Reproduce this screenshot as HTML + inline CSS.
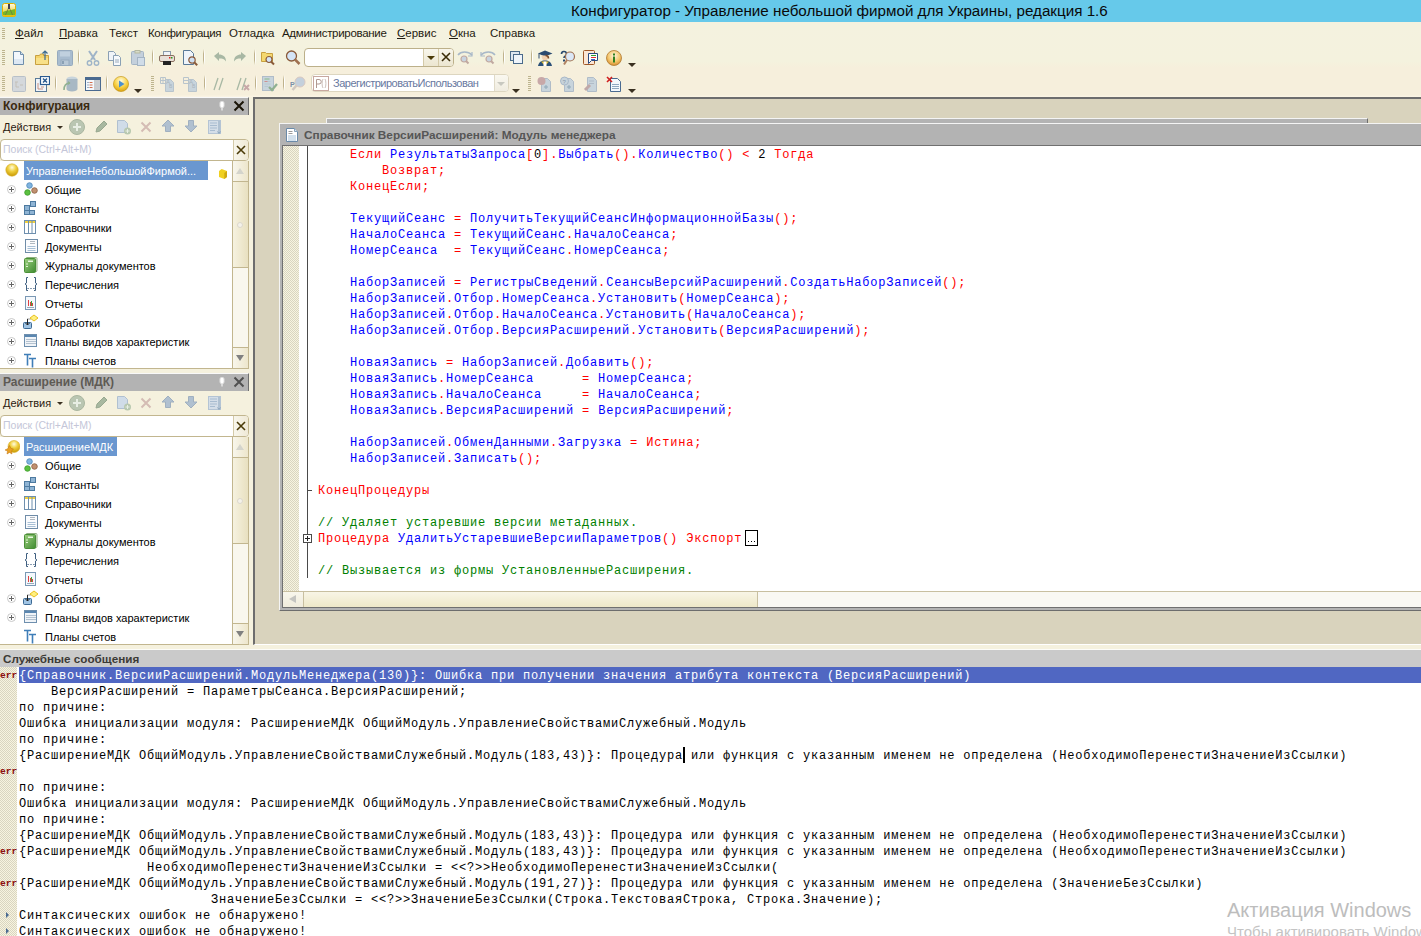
<!DOCTYPE html>
<html><head><meta charset="utf-8">
<style>
*{box-sizing:border-box}
html,body{margin:0;padding:0}
body{width:1421px;height:936px;position:relative;overflow:hidden;background:#f5f1de;font-family:"Liberation Sans",sans-serif;font-size:11px;color:#000}
.a{position:absolute}
.t{position:absolute;white-space:pre;line-height:1}
#title{left:0;top:0;width:1421px;height:22px;background:#66c9ea}
.menu{top:28px;font-size:11.5px;color:#1e1a10}
.menu u{text-decoration:underline}
.grip{position:absolute;width:3px;background:repeating-linear-gradient(#bdb48e 0 1px,transparent 1px 2px)}
.sep{position:absolute;width:1px;background:#cdc4a4}
.hdr{position:absolute;background:#b3b3b3;border-top:1px solid #f8f8f8}
.code{position:absolute;font-family:"Liberation Mono",monospace;font-size:12px;letter-spacing:0.8px;line-height:16px;white-space:pre}
.k{color:#f00}.i{color:#00f}.n{color:#000}.c{color:#008000}
.chk{background-color:#ede9d2;background-image:repeating-conic-gradient(#d9d5c0 0 25%,#f7f4e0 0 50%);background-size:2px 2px}
.tree{position:absolute;background:#fff;border-bottom:1px solid #c2b68f}
.row{position:absolute;left:0;height:19px;width:230px}
.row .tx{position:absolute;left:45px;top:4px;font-size:11px;line-height:11px;white-space:pre}
.plus{position:absolute;left:7px;top:5px;width:9px;height:9px;border-radius:50%;border:1px solid #c9c9c9}
.plus:before{content:"";position:absolute;left:1px;top:3px;width:5px;height:1px;background:#666}
.plus:after{content:"";position:absolute;left:3px;top:1px;width:1px;height:5px;background:#666}
.msg{position:absolute;left:17px;top:667px;width:1404px;height:269px;background:#fff}
.err{position:absolute;left:0;font-family:"Liberation Mono",monospace;font-size:9.5px;font-weight:bold;color:#8b1010;line-height:9px}
</style></head><body>
<!-- title bar -->
<div id="title" class="a"></div>
<svg class="a" style="left:2px;top:3px" width="14" height="14" viewBox="0 0 14 14"><defs><linearGradient id="tg" x1="0" y1="0" x2="0" y2="1"><stop offset="0" stop-color="#fffbe8"/><stop offset="0.5" stop-color="#f4e070"/><stop offset="1" stop-color="#e0c020"/></linearGradient></defs><rect x="0.5" y="0.5" width="13" height="13" rx="2" fill="url(#tg)" stroke="#e0b000"/><path d="M1 9c3-2 6-1 12-3v7H1z" fill="#78b828"/><path d="M3 13l4-9 4 9" fill="none" stroke="#6a7a40" stroke-width="0.8"/><rect x="6" y="1" width="2" height="5" fill="#404050"/><rect x="0.5" y="12" width="13" height="1.5" fill="#e8c010"/></svg>
<div class="t" style="left:571px;top:3px;font-size:15.2px;color:#0a0a0a">Конфигуратор - Управление небольшой фирмой для Украины, редакция 1.6</div>

<div class="a" style="left:0;top:22px;width:1421px;height:75px;background:linear-gradient(#f4f2df,#f4f2de 52%,#f6efdc 60%,#f6efdc 97%,#fbf5e6)"></div>
<!-- menu -->
<div class="grip" style="left:2px;top:28px;height:12px"></div>
<div class="t menu" style="left:15px"><u>Ф</u>айл</div>
<div class="t menu" style="left:59px"><u>П</u>равка</div>
<div class="t menu" style="left:109px">Текст</div>
<div class="t menu" style="left:148px;letter-spacing:-0.33px">Конфигурация</div>
<div class="t menu" style="left:229px">Отладка</div>
<div class="t menu" style="left:282px;letter-spacing:-0.3px">Администрирование</div>
<div class="t menu" style="left:397px"><u>С</u>ервис</div>
<div class="t menu" style="left:449px"><u>О</u>кна</div>
<div class="t menu" style="left:490px">Справка</div>

<!--TOOLBARS-->
<div class="grip" style="left:2px;top:50px;height:15px"></div><div class="grip" style="left:2px;top:76px;height:15px"></div><svg class="a" style="left:11px;top:50px" width="16" height="16" viewBox="0 0 16 16"><path d="M2.5 1.5h7l3 3v10h-10z" fill="#f2f7fc" stroke="#6f8eab"/><path d="M9.5 1.5v3h3" fill="#d0e0ee" stroke="#6f8eab"/><rect x="3" y="9" width="9" height="5" fill="#dde8f3"/></svg><svg class="a" style="left:34px;top:50px" width="16" height="16" viewBox="0 0 16 16"><path d="M1.5 5.5h4l1 -1.5h3v1.5h5v9h-13z" fill="#f4d46a" stroke="#c8a040"/><rect x="2" y="8" width="12" height="6" fill="#f8e088"/><path d="M11 10V1M8.5 3.5L11 1l2.5 2.5" fill="none" stroke="#3a6a90" stroke-width="1.2"/></svg><svg class="a" style="left:57px;top:50px" width="16" height="16" viewBox="0 0 16 16"><rect x="0.5" y="0.5" width="15" height="15" rx="1" fill="#a8bccf" stroke="#96aabe"/><rect x="3" y="1.5" width="10" height="5" fill="#c0d0de"/><rect x="4" y="10" width="8" height="5.5" fill="#b8c8d6" stroke="#96aabe"/><rect x="5" y="11" width="2" height="3" fill="#8aa0b4"/></svg><div class="sep" style="left:78px;top:49px;height:16px;background:linear-gradient(rgba(190,178,140,0),#bfb28c 30%,#bfb28c 70%,rgba(190,178,140,0))"></div><div class="sep" style="left:79px;top:49px;height:16px;background:linear-gradient(rgba(255,255,255,0),#fff 30%,#fff 70%,rgba(255,255,255,0))"></div><svg class="a" style="left:85px;top:50px" width="16" height="16" viewBox="0 0 16 16"><path d="M4 1l6 9M12 1L6 10" stroke="#9fb4c8" stroke-width="2"/><circle cx="4.5" cy="13" r="2.2" fill="none" stroke="#9fb4c8" stroke-width="1.4"/><circle cx="11.5" cy="13" r="2.2" fill="none" stroke="#9fb4c8" stroke-width="1.4"/></svg><svg class="a" style="left:107px;top:50px" width="16" height="16" viewBox="0 0 16 16"><path d="M1.5 1.5h5l2 2v7h-7z" fill="#f0f4f8" stroke="#8aa0b4"/><path d="M6.5 5.5h5l2 2v8h-7z" fill="#f6f9fc" stroke="#8aa0b4"/><path d="M8 10h4M8 12h4" stroke="#9ab"/></svg><svg class="a" style="left:130px;top:50px" width="16" height="16" viewBox="0 0 16 16"><rect x="1.5" y="1.5" width="12" height="13" rx="1" fill="#c4d0dc" stroke="#a4b4c4"/><rect x="5" y="0.5" width="5" height="2.5" fill="#d8dcc8" stroke="#b4b8a0"/><rect x="7.5" y="7.5" width="7" height="8" fill="#d0dce8" stroke="#a4b4c4"/></svg><div class="sep" style="left:152px;top:49px;height:16px;background:linear-gradient(rgba(190,178,140,0),#bfb28c 30%,#bfb28c 70%,rgba(190,178,140,0))"></div><div class="sep" style="left:153px;top:49px;height:16px;background:linear-gradient(rgba(255,255,255,0),#fff 30%,#fff 70%,rgba(255,255,255,0))"></div><svg class="a" style="left:159px;top:50px" width="16" height="16" viewBox="0 0 16 16"><rect x="4.5" y="1.5" width="7" height="4" fill="#f0f4f8" stroke="#8a9aaa"/><rect x="0.5" y="5.5" width="15" height="6" rx="1.5" fill="#e8e0d8" stroke="#8a7060"/><rect x="4" y="11" width="8" height="4" fill="#222"/><rect x="10" y="7" width="1.5" height="1.5" fill="#e02020"/><rect x="12" y="7" width="1.5" height="1.5" fill="#20a020"/></svg><svg class="a" style="left:182px;top:50px" width="16" height="16" viewBox="0 0 16 16"><path d="M1.5 0.5h7l3 3v11h-10z" fill="#eef4fa" stroke="#5a7a98"/><circle cx="10" cy="10" r="3.2" fill="#cfe0f2" stroke="#8a5a3a" stroke-width="1.2"/><path d="M12.2 12.2l3 3" stroke="#8a5a3a" stroke-width="2"/></svg><div class="sep" style="left:203px;top:49px;height:16px;background:linear-gradient(rgba(190,178,140,0),#bfb28c 30%,#bfb28c 70%,rgba(190,178,140,0))"></div><div class="sep" style="left:204px;top:49px;height:16px;background:linear-gradient(rgba(255,255,255,0),#fff 30%,#fff 70%,rgba(255,255,255,0))"></div><svg class="a" style="left:212px;top:50px" width="16" height="16" viewBox="0 0 16 16"><path d="M2 6l5-4v2.5c4 0 7 2 7 7-1.5-2.5-3.5-3-7-3V11z" fill="#a8b8a4"/></svg><svg class="a" style="left:232px;top:50px" width="16" height="16" viewBox="0 0 16 16"><path d="M14 6L9 2v2.5c-4 0-7 2-7 7 1.5-2.5 3.5-3 7-3V11z" fill="#a8b8a4"/></svg><div class="sep" style="left:254px;top:49px;height:16px;background:linear-gradient(rgba(190,178,140,0),#bfb28c 30%,#bfb28c 70%,rgba(190,178,140,0))"></div><div class="sep" style="left:255px;top:49px;height:16px;background:linear-gradient(rgba(255,255,255,0),#fff 30%,#fff 70%,rgba(255,255,255,0))"></div><svg class="a" style="left:260px;top:50px" width="16" height="16" viewBox="0 0 16 16"><path d="M1.5 2.5h4l1 1h6v8h-11z" fill="#f4d870" stroke="#c8a040"/><circle cx="9" cy="9.5" r="3" fill="#d4e4f6" stroke="#8a5a3a" stroke-width="1.2"/><path d="M11 11.5l3 3" stroke="#8a5a3a" stroke-width="2"/></svg><svg class="a" style="left:285px;top:50px" width="16" height="16" viewBox="0 0 16 16"><circle cx="6.5" cy="6" r="5" fill="#d4e4f6" stroke="#8a5a3a" stroke-width="1.3"/><path d="M10 9.5l4.5 4.5" stroke="#a07050" stroke-width="2.5"/></svg><div class="a" style="left:304px;top:48px;width:150px;height:19px;background:#fff;border:1px solid #bcb08a;border-radius:4px"></div><div class="a" style="left:423px;top:49px;width:30px;height:17px;background:linear-gradient(#f8f6ec,#ece6d0);border-left:1px solid #d4caa8;border-radius:0 3px 3px 0"></div><div class="a" style="left:438px;top:49px;width:1px;height:17px;background:#d4caa8"></div><div class="a" style="left:427px;top:56px;width:0;height:0;border-left:4px solid transparent;border-right:4px solid transparent;border-top:4px solid #4a3a08"></div><svg class="a" style="left:441px;top:52px" width="10" height="10" viewBox="0 0 10 10"><path d="M1 1l8 8M9 1l-8 8" stroke="#3a2c08" stroke-width="1.6"/></svg><svg class="a" style="left:457px;top:50px" width="16" height="16" viewBox="0 0 16 16"><path d="M1 5c3-4 10-4 14 0" fill="none" stroke="#a8b8c8" stroke-width="1.5"/><path d="M15 2v4h-4" fill="none" stroke="#a8b8c8" stroke-width="1.2"/><circle cx="7" cy="9" r="3" fill="#c8d4e0" stroke="#c0a8a0" stroke-width="1.2"/><path d="M9 11l2.5 2.5" stroke="#c0a8a0" stroke-width="2"/></svg><svg class="a" style="left:480px;top:50px" width="16" height="16" viewBox="0 0 16 16"><path d="M1 5c4-4 11-4 14 0" fill="none" stroke="#a8b8c8" stroke-width="1.5"/><path d="M1 2v4h4" fill="none" stroke="#a8b8c8" stroke-width="1.2"/><circle cx="9" cy="9" r="3" fill="#c8d4e0" stroke="#c0a8a0" stroke-width="1.2"/><path d="M11 11l2.5 2.5" stroke="#c0a8a0" stroke-width="2"/></svg><div class="sep" style="left:503px;top:49px;height:16px;background:linear-gradient(rgba(190,178,140,0),#bfb28c 30%,#bfb28c 70%,rgba(190,178,140,0))"></div><div class="sep" style="left:504px;top:49px;height:16px;background:linear-gradient(rgba(255,255,255,0),#fff 30%,#fff 70%,rgba(255,255,255,0))"></div><svg class="a" style="left:509px;top:50px" width="16" height="16" viewBox="0 0 16 16"><rect x="1.5" y="1.5" width="9" height="9" fill="#dce6f0" stroke="#4a6a8a"/><rect x="4.5" y="4.5" width="9" height="9" fill="#eef4fa" stroke="#4a6a8a"/></svg><div class="sep" style="left:531px;top:49px;height:16px;background:linear-gradient(rgba(190,178,140,0),#bfb28c 30%,#bfb28c 70%,rgba(190,178,140,0))"></div><div class="sep" style="left:532px;top:49px;height:16px;background:linear-gradient(rgba(255,255,255,0),#fff 30%,#fff 70%,rgba(255,255,255,0))"></div><svg class="a" style="left:537px;top:50px" width="16" height="16" viewBox="0 0 16 16"><path d="M1 3.5l7-3 7.5 3-7.5 3z" fill="#2a4a70"/><path d="M2 3.5v5" stroke="#2a4a70"/><path d="M4.5 5.5c0 3 1.5 5 3.5 5s3.5-2 3.5-5z" fill="#f0d0b0"/><path d="M8.5 5.5c2 0 3 1.5 3 3" fill="none" stroke="#7a4a28" stroke-width="1.5"/><path d="M1 16c1-4 3-5.5 7-5.5s6 1.5 7 5.5z" fill="#2a5078"/><path d="M4 11.5l4 4.5 4-4.5" fill="#e8c030"/><path d="M6.5 11.5h3v4.5h-3z" fill="#fff"/></svg><svg class="a" style="left:560px;top:50px" width="16" height="16" viewBox="0 0 16 16"><path d="M1.5 4a2.5 2.5 0 1 1 3.5 2.3c-.8.4-1 .9-1 1.7" fill="none" stroke="#2a4a70" stroke-width="1.7"/><rect x="3" y="9.5" width="2" height="2" fill="#2a4a70"/><circle cx="10" cy="6.5" r="4.5" fill="#dce8f6" stroke="#a07050" stroke-width="1.2"/><path d="M7 10l-3 4.5" stroke="#b08060" stroke-width="2"/></svg><svg class="a" style="left:583px;top:50px" width="16" height="16" viewBox="0 0 16 16"><rect x="0.5" y="0.5" width="11" height="14" rx="1" fill="#fbe6d4" stroke="#a05828"/><path d="M5.5 3.5h9v7h-6l-3 3z" fill="#fff" stroke="#2a4a80"/><path d="M8 5.5h5" stroke="#30a030"/><path d="M8 7.5h5" stroke="#e03030"/><path d="M8 9.5h4" stroke="#4060c0"/></svg><svg class="a" style="left:606px;top:50px" width="16" height="16" viewBox="0 0 16 16"><defs><radialGradient id="ig" cx="50%" cy="35%" r="65%"><stop offset="0" stop-color="#fff6e0"/><stop offset="0.6" stop-color="#f4c870"/><stop offset="1" stop-color="#d89030"/></radialGradient></defs><circle cx="8" cy="8" r="7.5" fill="url(#ig)" stroke="#b07830" stroke-width="0.8"/><rect x="7" y="6.5" width="2" height="6" fill="#308020"/><rect x="7" y="3.5" width="2" height="2" fill="#308020"/></svg><div class="a" style="left:628px;top:63px;width:0;height:0;border-left:4px solid transparent;border-right:4px solid transparent;border-top:4px solid #3a3020"></div><svg class="a" style="left:11px;top:76px" width="16" height="16" viewBox="0 0 16 16"><rect x="1.5" y="0.5" width="13" height="15" rx="1" fill="#d4d8dc" stroke="#b8c0c8"/><path d="M4 6h3M5 6v5h3M9 9h3" fill="none" stroke="#c4c0b8"/></svg><svg class="a" style="left:34px;top:76px" width="16" height="16" viewBox="0 0 16 16"><rect x="1.5" y="2.5" width="11" height="13" fill="#f0f4f8" stroke="#5a7a98"/><path d="M4 7v6h5M7 11h3" fill="none" stroke="#c89080"/><rect x="6.5" y="0.5" width="9" height="8" fill="#fff" stroke="#2a5a90" stroke-width="1.2"/><path d="M9 2.5l4 4M13 2.5l-4 4" stroke="#2a5a90" stroke-width="1.5"/></svg><div class="sep" style="left:55px;top:75px;height:16px;background:linear-gradient(rgba(190,178,140,0),#bfb28c 30%,#bfb28c 70%,rgba(190,178,140,0))"></div><div class="sep" style="left:56px;top:75px;height:16px;background:linear-gradient(rgba(255,255,255,0),#fff 30%,#fff 70%,rgba(255,255,255,0))"></div><svg class="a" style="left:62px;top:76px" width="16" height="16" viewBox="0 0 16 16"><ellipse cx="10" cy="3" rx="5.5" ry="2.5" fill="#c8d4dc"/><path d="M4.5 3v10c0 1.5 2.5 2.5 5.5 2.5s5.5-1 5.5-2.5V3" fill="#a8b8c4"/><path d="M2 14c0-5 2-7 6-7" fill="none" stroke="#90b090" stroke-width="1.6"/><path d="M6 5l2.5 2-2.5 2" fill="#90b090"/></svg><svg class="a" style="left:85px;top:76px" width="16" height="16" viewBox="0 0 16 16"><rect x="0.5" y="1.5" width="15" height="13" fill="#f4f8fc" stroke="#4a6a90"/><rect x="1" y="2" width="14" height="2" fill="#4a6a90"/><rect x="9" y="4" width="6" height="10" fill="#c8ccd0"/><path d="M2.5 6.5h1M2.5 9h1M2.5 11.5h1" stroke="#4a6a90"/><path d="M4.5 6.5h3M4.5 9h3M4.5 11.5h3" stroke="#d07050"/></svg><div class="sep" style="left:106px;top:75px;height:16px;background:linear-gradient(rgba(190,178,140,0),#bfb28c 30%,#bfb28c 70%,rgba(190,178,140,0))"></div><div class="sep" style="left:107px;top:75px;height:16px;background:linear-gradient(rgba(255,255,255,0),#fff 30%,#fff 70%,rgba(255,255,255,0))"></div><svg class="a" style="left:113px;top:76px" width="16" height="16" viewBox="0 0 16 16"><defs><radialGradient id="pg" cx="50%" cy="30%" r="70%"><stop offset="0" stop-color="#fffbe0"/><stop offset="0.6" stop-color="#f8d040"/><stop offset="1" stop-color="#d8a010"/></radialGradient></defs><circle cx="8" cy="8" r="7.6" fill="url(#pg)" stroke="#c09010" stroke-width="0.6"/><path d="M6 4.5v7l5.5-3.5z" fill="#4a90d0"/></svg><div class="a" style="left:134px;top:89px;width:0;height:0;border-left:4px solid transparent;border-right:4px solid transparent;border-top:4px solid #3a3020"></div><div class="grip" style="left:151px;top:76px;height:15px"></div><svg class="a" style="left:160px;top:76px" width="16" height="16" viewBox="0 0 16 16"><path d="M0.5 1.5h5v6h-5zM0.5 4.5h5M3 1.5v6" fill="none" stroke="#b8c4cc"/><path d="M5.5 3.5h5l3 3v9h-8z" fill="#c8d4dc" stroke="#b8c4cc"/><text x="6" y="8" font-size="6" fill="#a8b4bc" font-family="Liberation Sans">A</text><text x="9" y="12" font-size="5" fill="#a8b4bc" font-family="Liberation Sans">B</text></svg><svg class="a" style="left:183px;top:76px" width="16" height="16" viewBox="0 0 16 16"><path d="M0.5 1.5h5v6h-5zM0.5 4.5h5" fill="none" stroke="#b8c4cc"/><path d="M5.5 3.5h5l3 3v9h-8z" fill="#c8d4dc" stroke="#b8c4cc"/><text x="6" y="8" font-size="6" fill="#a8b4bc" font-family="Liberation Sans">A</text><text x="9" y="12" font-size="5" fill="#a8b4bc" font-family="Liberation Sans">B</text></svg><div class="sep" style="left:204px;top:75px;height:16px;background:linear-gradient(rgba(190,178,140,0),#bfb28c 30%,#bfb28c 70%,rgba(190,178,140,0))"></div><div class="sep" style="left:205px;top:75px;height:16px;background:linear-gradient(rgba(255,255,255,0),#fff 30%,#fff 70%,rgba(255,255,255,0))"></div><svg class="a" style="left:213px;top:76px" width="16" height="16" viewBox="0 0 16 16"><path d="M5 2l-4 12M10 2L6 14" stroke="#a8b8a4" stroke-width="1.3"/></svg><svg class="a" style="left:236px;top:76px" width="16" height="16" viewBox="0 0 16 16"><path d="M5 2l-4 12M10 2L6 14" stroke="#a8b8a4" stroke-width="1.3"/><path d="M8 9l5 5M13 9l-5 5" stroke="#c8a8a8" stroke-width="2"/></svg><div class="sep" style="left:255px;top:75px;height:16px;background:linear-gradient(rgba(190,178,140,0),#bfb28c 30%,#bfb28c 70%,rgba(190,178,140,0))"></div><div class="sep" style="left:256px;top:75px;height:16px;background:linear-gradient(rgba(255,255,255,0),#fff 30%,#fff 70%,rgba(255,255,255,0))"></div><svg class="a" style="left:262px;top:76px" width="16" height="16" viewBox="0 0 16 16"><rect x="0.5" y="0.5" width="11" height="14" fill="#c8d4dc" stroke="#b0bcc8"/><path d="M2.5 3h5M2.5 5.5h6M2.5 8h6M2.5 10.5h4" stroke="#b8c8d0"/><path d="M2.5 3h5" stroke="#90c090"/><path d="M2.5 5.5h3" stroke="#d09090"/><path d="M7 11l3 3 5-6" fill="none" stroke="#90b090" stroke-width="2.2"/></svg><div class="sep" style="left:283px;top:75px;height:16px;background:linear-gradient(rgba(190,178,140,0),#bfb28c 30%,#bfb28c 70%,rgba(190,178,140,0))"></div><div class="sep" style="left:284px;top:75px;height:16px;background:linear-gradient(rgba(255,255,255,0),#fff 30%,#fff 70%,rgba(255,255,255,0))"></div><svg class="a" style="left:290px;top:76px" width="16" height="16" viewBox="0 0 16 16"><circle cx="10" cy="6" r="5" fill="#c4d0dc" stroke="#d8c8c0"/><text x="0" y="11" font-size="7" font-weight="bold" fill="#7890a8" font-family="Liberation Sans">P</text><path d="M6.5 9.5l-4 4.5" stroke="#d0c8c0" stroke-width="2.5"/></svg><div class="a" style="left:311px;top:74px;width:198px;height:18px;background:#fff;border:1px solid #ddd6c0;border-radius:4px"></div><div class="a" style="left:494px;top:75px;width:14px;height:16px;background:linear-gradient(#faf8f0,#f0ece0);border-left:1px solid #e0dac8;border-radius:0 3px 3px 0"></div><div class="a" style="left:497px;top:82px;width:0;height:0;border-left:4px solid transparent;border-right:4px solid transparent;border-top:4px solid #c8c8c0"></div><svg class="a" style="left:313px;top:76px" width="16" height="15" viewBox="0 0 16 15"><rect x="0.5" y="0.5" width="15" height="14" fill="#fff" stroke="#c8a8a0"/><path d="M3.5 12V3.5h2.5a2 2 0 0 1 0 4.5H3.5" fill="none" stroke="#b09890"/><path d="M10 3c-1.2 1.5-1.2 7.5 0 9M12 3c1.2 1.5 1.2 7.5 0 9" fill="none" stroke="#c0b0a8" stroke-width="0.8"/></svg><div class="t" style="left:333px;top:78px;font-size:11px;letter-spacing:-0.5px;color:#6878a0;width:160px;overflow:hidden">ЗарегистрироватьИспользован</div><div class="a" style="left:512px;top:89px;width:0;height:0;border-left:4px solid transparent;border-right:4px solid transparent;border-top:4px solid #3a3020"></div><div class="grip" style="left:528px;top:76px;height:15px"></div><svg class="a" style="left:537px;top:76px" width="16" height="16" viewBox="0 0 16 16"><path d="M4.5 2.5h6l3 3v10h-9z" fill="#c8d4dc" stroke="#b0bcc8"/><circle cx="4.5" cy="5" r="4" fill="#c8a8a8"/><path d="M7 11h4M9 9v4" stroke="#90a8b8"/></svg><svg class="a" style="left:560px;top:76px" width="16" height="16" viewBox="0 0 16 16"><path d="M4.5 2.5h6l3 3v10h-9z" fill="#c8d4dc" stroke="#b0bcc8"/><circle cx="4.5" cy="5" r="4" fill="#c8d4dc" stroke="#a8b8c8"/><text x="2.5" y="7.5" font-size="6" fill="#8898a8" font-family="Liberation Sans">?</text><path d="M7 11h4M9 9v4" stroke="#90a8b8"/></svg><svg class="a" style="left:583px;top:76px" width="16" height="16" viewBox="0 0 16 16"><path d="M4.5 1.5h6l3 3v11h-9z" fill="#c8d4dc" stroke="#b0bcc8"/><path d="M6 5h5M6 7.5h5" stroke="#b0bcc8"/><path d="M2 14l5-5" stroke="#c0a8a8" stroke-width="3"/></svg><svg class="a" style="left:606px;top:76px" width="16" height="16" viewBox="0 0 16 16"><path d="M4.5 2.5h7l3 3v10h-10z" fill="#f4f8fc" stroke="#4a6a90"/><path d="M6 8.5h7M6 10.5h7M6 12.5h7" stroke="#90a8c0"/><path d="M1 1l5 5M6 1L1 6" stroke="#d02020" stroke-width="1.6"/></svg><div class="a" style="left:628px;top:89px;width:0;height:0;border-left:4px solid transparent;border-right:4px solid transparent;border-top:4px solid #3a3020"></div>
<!-- MDI -->
<div class="a" style="left:253px;top:97px;width:1168px;height:548px;background:#d9d3bd;border-left:2px solid #6d6d6d;border-top:2px solid #6d6d6d;border-bottom:1px solid #fff"></div>
<!-- background window -->
<div class="a" style="left:326px;top:118px;width:1042px;height:6px;background:#b3b3b3;border-top:1px solid #f4f4f4;border-left:1px solid #f4f4f4;border-right:1px solid #6d6d6d"></div>
<!-- editor window -->
<div class="a" style="left:279px;top:123px;width:1142px;height:488px;background:#b3b3b3;border-top:1px solid #f4f4f4;border-left:1px solid #f4f4f4;border-bottom:1px solid #6d6d6d"></div>
<svg class="a" style="left:285px;top:127px" width="14" height="16" viewBox="0 0 14 16"><path d="M1.5 1.5h8l3 3v10h-11z" fill="#fff" stroke="#6a8aa8"/><path d="M9.5 1.5v3h3" fill="#dbe7f2" stroke="#8aa4bc"/><path d="M3.5 4.5h4M3.5 6.5h4" stroke="#9a9a9a"/><path d="M3 9h8M3 11h8M3 13h8" stroke="#a8c4dc" stroke-width="1.2"/></svg><div class="t" style="left:304px;top:130px;font-size:11.8px;font-weight:bold;color:#565656">Справочник ВерсииРасширений: Модуль менеджера</div>
<div class="a" style="left:282px;top:145px;width:1139px;height:463px;background:#fff;border-left:1px solid #707070;border-top:1px solid #707070;border-bottom:1px solid #707070"></div>
<div class="a chk" style="left:283px;top:146px;width:16px;height:445px"></div>
<div class="a" style="left:307px;top:146px;width:1px;height:432px;background:#4a4a4a"></div>
<div class="a" style="left:307px;top:490px;width:5px;height:1px;background:#4a4a4a"></div>
<div class="a" style="left:303px;top:534px;width:9px;height:9px;border:1px solid #4a4a4a;background:#fff"></div>
<div class="a" style="left:305px;top:538px;width:5px;height:1px;background:#222"></div>
<div class="a" style="left:307px;top:536px;width:1px;height:5px;background:#222"></div>
<!-- h scrollbar -->
<div class="a" style="left:283px;top:591px;width:1138px;height:16px;background:#f9f8f3;border-top:1px solid #c8bfa0"></div>
<div class="a" style="left:303px;top:592px;width:455px;height:15px;background:linear-gradient(#f8f5e6,#eee8c8);border-left:1px solid #c8bfa0;border-right:1px solid #c8bfa0"></div>
<div class="a" style="left:283px;top:592px;width:20px;height:15px;background:linear-gradient(#f8f6ec,#f0ecdc)"></div>
<div class="a" style="left:289px;top:595px;width:0;height:0;border-top:4px solid transparent;border-bottom:4px solid transparent;border-right:7px solid #c4c4c0"></div>

<!--CODE-->
<div class="code" style="left:318px;top:147px">    <span class="k">Если</span> <span class="i">РезультатыЗапроса</span><span class="k">[</span><span class="n">0</span><span class="k">]</span><span class="k">.</span><span class="i">Выбрать</span><span class="k">(</span><span class="k">)</span><span class="k">.</span><span class="i">Количество</span><span class="k">(</span><span class="k">)</span> <span class="k">&lt;</span> <span class="n">2</span> <span class="k">Тогда</span>
        <span class="k">Возврат</span><span class="k">;</span>
    <span class="k">КонецЕсли</span><span class="k">;</span>

    <span class="i">ТекущийСеанс</span> <span class="k">=</span> <span class="i">ПолучитьТекущийСеансИнформационнойБазы</span><span class="k">(</span><span class="k">)</span><span class="k">;</span>
    <span class="i">НачалоСеанса</span> <span class="k">=</span> <span class="i">ТекущийСеанс</span><span class="k">.</span><span class="i">НачалоСеанса</span><span class="k">;</span>
    <span class="i">НомерСеанса</span>  <span class="k">=</span> <span class="i">ТекущийСеанс</span><span class="k">.</span><span class="i">НомерСеанса</span><span class="k">;</span>

    <span class="i">НаборЗаписей</span> <span class="k">=</span> <span class="i">РегистрыСведений</span><span class="k">.</span><span class="i">СеансыВерсийРасширений</span><span class="k">.</span><span class="i">СоздатьНаборЗаписей</span><span class="k">(</span><span class="k">)</span><span class="k">;</span>
    <span class="i">НаборЗаписей</span><span class="k">.</span><span class="i">Отбор</span><span class="k">.</span><span class="i">НомерСеанса</span><span class="k">.</span><span class="i">Установить</span><span class="k">(</span><span class="i">НомерСеанса</span><span class="k">)</span><span class="k">;</span>
    <span class="i">НаборЗаписей</span><span class="k">.</span><span class="i">Отбор</span><span class="k">.</span><span class="i">НачалоСеанса</span><span class="k">.</span><span class="i">Установить</span><span class="k">(</span><span class="i">НачалоСеанса</span><span class="k">)</span><span class="k">;</span>
    <span class="i">НаборЗаписей</span><span class="k">.</span><span class="i">Отбор</span><span class="k">.</span><span class="i">ВерсияРасширений</span><span class="k">.</span><span class="i">Установить</span><span class="k">(</span><span class="i">ВерсияРасширений</span><span class="k">)</span><span class="k">;</span>

    <span class="i">НоваяЗапись</span> <span class="k">=</span> <span class="i">НаборЗаписей</span><span class="k">.</span><span class="i">Добавить</span><span class="k">(</span><span class="k">)</span><span class="k">;</span>
    <span class="i">НоваяЗапись</span><span class="k">.</span><span class="i">НомерСеанса</span>      <span class="k">=</span> <span class="i">НомерСеанса</span><span class="k">;</span>
    <span class="i">НоваяЗапись</span><span class="k">.</span><span class="i">НачалоСеанса</span>     <span class="k">=</span> <span class="i">НачалоСеанса</span><span class="k">;</span>
    <span class="i">НоваяЗапись</span><span class="k">.</span><span class="i">ВерсияРасширений</span> <span class="k">=</span> <span class="i">ВерсияРасширений</span><span class="k">;</span>

    <span class="i">НаборЗаписей</span><span class="k">.</span><span class="i">ОбменДанными</span><span class="k">.</span><span class="i">Загрузка</span> <span class="k">=</span> <span class="k">Истина</span><span class="k">;</span>
    <span class="i">НаборЗаписей</span><span class="k">.</span><span class="i">Записать</span><span class="k">(</span><span class="k">)</span><span class="k">;</span>

<span class="k">КонецПроцедуры</span>

<span class="c">// Удаляет устаревшие версии метаданных.</span>
<span class="k">Процедура</span> <span class="i">УдалитьУстаревшиеВерсииПараметров</span><span class="k">(</span><span class="k">)</span> <span class="k">Экспорт</span>

<span class="c">// Вызывается из формы УстановленныеРасширения.</span></div>
<div class="a" style="left:745px;top:530px;width:13px;height:16px;border:1px solid #000;background:#fff"></div><div class="a" style="left:748px;top:541px;width:9px;height:1px;background:repeating-linear-gradient(90deg,#000 0 1px,transparent 1px 3px)"></div>
<!--LEFT-->
<div class="hdr" style="left:0;top:97px;width:249px;height:18px;border-right:1px solid #707070"></div><div class="t" style="left:3px;top:100px;font-size:12px;font-weight:bold;color:#3a2a10">Конфигурация</div><svg class="a" style="left:219px;top:101px" width="6" height="10" viewBox="0 0 6 10"><rect x="1" y="0.5" width="4" height="6" rx="1.5" fill="#fff" stroke="#e0e0e0"/><path d="M3 6.5v3" stroke="#fff"/></svg><svg class="a" style="left:233px;top:100px" width="12" height="12" viewBox="0 0 12 12"><path d="M1.5 1.5l9 9M10.5 1.5l-9 9" stroke="#1a1408" stroke-width="2"/></svg><div class="t" style="left:3px;top:122px;font-size:11px;color:#2a2010">Действия</div><div class="a" style="left:57px;top:126px;width:0;height:0;border-left:3px solid transparent;border-right:3px solid transparent;border-top:3px solid #3a3020"></div><svg class="a" style="left:69px;top:119px" width="16" height="16" viewBox="0 0 16 16"><circle cx="8" cy="8" r="7.5" fill="#bac6b2" stroke="#aab6a0"/><path d="M8 4v8M4 8h8" stroke="#e8eee4" stroke-width="2"/></svg><svg class="a" style="left:93px;top:119px" width="16" height="16" viewBox="0 0 16 16"><path d="M3 13l1-4 7-7 3 3-7 7z" fill="#a8b8a0" stroke="#98a890"/></svg><svg class="a" style="left:116px;top:119px" width="16" height="16" viewBox="0 0 16 16"><path d="M1.5 1.5h7l3 3v9h-10z" fill="#d0dce8" stroke="#b0c0d0"/><circle cx="11.5" cy="12" r="3.5" fill="#b8c8b0"/><path d="M11.5 10v4M9.5 12h4" stroke="#e8efe4"/></svg><svg class="a" style="left:139px;top:119px" width="16" height="16" viewBox="0 0 16 16"><path d="M2.5 3.5l9 9M11.5 3.5l-9 9" stroke="#d4bcb4" stroke-width="2"/></svg><svg class="a" style="left:161px;top:119px" width="16" height="16" viewBox="0 0 16 16"><path d="M7 1L1 7h3.5v5.5h5V7H13z" fill="#b0c0d0" stroke="#a0b0c0"/></svg><svg class="a" style="left:184px;top:119px" width="16" height="16" viewBox="0 0 16 16"><path d="M7 13L1 7h3.5V1.5h5V7H13z" fill="#b0c0d0" stroke="#a0b0c0"/></svg><svg class="a" style="left:207px;top:119px" width="16" height="16" viewBox="0 0 16 16"><rect x="1.5" y="1.5" width="12" height="13" fill="#d4dee8" stroke="#b4c4d4"/><path d="M3 4h7M3 6.5h7M3 9h7M3 11.5h5" stroke="#a8bcd0"/><path d="M12 2v12M10.5 12.5l1.5 2 1.5-2" fill="none" stroke="#8aa4bc"/></svg><div class="a" style="left:0;top:139px;width:249px;height:22px;background:#fff;border:1px solid #c2b68f;border-radius:4px"></div><div class="a" style="left:233px;top:140px;width:15px;height:20px;background:linear-gradient(90deg,#f8f6ec,#efe9d6);border-left:1px solid #d4caa8;border-radius:0 3px 3px 0"></div><svg class="a" style="left:236px;top:145px" width="10" height="10" viewBox="0 0 10 10"><path d="M1 1l8 8M9 1l-8 8" stroke="#4a3a08" stroke-width="1.6"/></svg><div class="t" style="left:3px;top:144px;font-size:10.5px;color:#c4c6d8">Поиск (Ctrl+Alt+M)</div><div class="tree" style="left:0;top:161px;width:249px;height:208px;overflow:hidden"><div class="a" style="left:24px;top:0;width:184px;height:19px;background:#6a97d0"></div><div class="t" style="left:26px;top:5px;font-size:11px;color:#fff">УправлениеНебольшойФирмой...</div><svg class="a" style="left:5px;top:2px" width="14" height="14" viewBox="0 0 14 14"><defs><radialGradient id="gb" cx="50%" cy="30%" r="70%"><stop offset="0" stop-color="#fffce0"/><stop offset="0.45" stop-color="#f0d040"/><stop offset="1" stop-color="#c89800"/></radialGradient></defs><circle cx="7" cy="7" r="6.2" fill="url(#gb)" stroke="#d8b030" stroke-width="0.6"/></svg><svg class="a" style="left:219px;top:8px" width="8" height="10" viewBox="0 0 9 10" preserveAspectRatio="none"><path d="M0 2l3-2 6 2v6l-3 2-6-2z" fill="#f0d020"/><path d="M6 4v6l3-2V2z" fill="#d0a810"/></svg><div class="plus" style="top:24px"></div><div class="a" style="left:23px;top:20px;height:16px"><svg width="16" height="16" viewBox="0 0 16 16"><circle cx="6.5" cy="4.5" r="2.8" fill="#7fb4e0" stroke="#4f86b8" stroke-width="0.8"/><circle cx="4.5" cy="11.5" r="2.8" fill="#5cc040" stroke="#3a9a28" stroke-width="0.8"/><circle cx="11.5" cy="9.5" r="2.8" fill="#c09070" stroke="#8a6040" stroke-width="0.8"/></svg></div><div class="t" style="left:45px;top:24px;font-size:11px">Общие</div><div class="plus" style="top:43px"></div><div class="a" style="left:23px;top:39px;height:16px"><svg width="16" height="16" viewBox="0 0 16 16"><g fill="#8fb4d4" stroke="#4d7aa0" stroke-width="1"><rect x="1.5" y="5.5" width="5" height="5"/><rect x="7.5" y="1.5" width="5" height="5"/><rect x="1.5" y="10.5" width="5" height="4"/><rect x="6.5" y="10.5" width="5" height="4"/></g></svg></div><div class="t" style="left:45px;top:43px;font-size:11px">Константы</div><div class="plus" style="top:62px"></div><div class="a" style="left:23px;top:58px;height:16px"><svg width="16" height="16" viewBox="0 0 16 16"><rect x="1.5" y="1.5" width="11" height="13" fill="#fff" stroke="#6e8fae"/><rect x="2" y="2" width="10" height="2" fill="#f0d040"/><path d="M5.5 2v12M9 2v12" stroke="#6e8fae"/></svg></div><div class="t" style="left:45px;top:62px;font-size:11px">Справочники</div><div class="plus" style="top:81px"></div><div class="a" style="left:23px;top:77px;height:16px"><svg width="16" height="16" viewBox="0 0 16 16"><rect x="2.5" y="1.5" width="12" height="13" fill="#fbfcfe" stroke="#6f8ca8"/><path d="M7 3.5h5M7 5.5h5" stroke="#b0b8c0"/><path d="M4.5 8.5h8M4.5 10.5h8M4.5 12.5h8" stroke="#a8c0d6"/></svg></div><div class="t" style="left:45px;top:81px;font-size:11px">Документы</div><div class="plus" style="top:100px"></div><div class="a" style="left:23px;top:96px;height:16px"><svg width="16" height="16" viewBox="0 0 16 16"><defs><linearGradient id="jg" x1="0" y1="0" x2="1" y2="1"><stop offset="0" stop-color="#9ed080"/><stop offset="1" stop-color="#3e8a30"/></linearGradient></defs><rect x="3" y="0.5" width="11" height="14" rx="1" fill="#e8f0e0" stroke="#90b080"/><rect x="1.5" y="1.5" width="11" height="14" rx="1" fill="url(#jg)" stroke="#4a9038"/><rect x="5" y="3.5" width="5" height="1.5" fill="#e8f8e0"/><path d="M3 7h2M3 9.5h2" stroke="#e0f4d4"/></svg></div><div class="t" style="left:45px;top:100px;font-size:11px">Журналы документов</div><div class="plus" style="top:119px"></div><div class="a" style="left:23px;top:115px;height:16px"><svg width="16" height="16" viewBox="0 0 16 16"><path d="M5 1.5H3.5v5.5L2 8l1.5 1v5.5H5M11 1.5h1.5v5.5L14 8l-1.5 1v5.5H11" fill="none" stroke="#3f5f80"/><path d="M4.5 12.5h1.2M7.4 12.5h1.2M10.3 12.5h1.2" stroke="#3f5f80" stroke-width="1.2"/></svg></div><div class="t" style="left:45px;top:119px;font-size:11px">Перечисления</div><div class="plus" style="top:138px"></div><div class="a" style="left:23px;top:134px;height:16px"><svg width="16" height="16" viewBox="0 0 16 16"><rect x="2.5" y="1.5" width="10" height="13" fill="#f4f8fc" stroke="#7a98b4"/><path d="M5.5 11V5M7.5 11V7M9.5 11V8" stroke="#e04040"/><path d="M8.5 11V6" stroke="#40a040"/><path d="M4 12.5h7" stroke="#9ab"/></svg></div><div class="t" style="left:45px;top:138px;font-size:11px">Отчеты</div><div class="plus" style="top:157px"></div><div class="a" style="left:23px;top:153px;height:16px"><svg width="16" height="16" viewBox="0 0 16 16"><rect x="0.5" y="8.5" width="8" height="6" rx="1" fill="#a0c4e4" stroke="#3d6a94"/><path d="M4.5 5v6M2.5 9l2 2 2-2" fill="none" stroke="#222"/><path d="M4.5 5h3" stroke="#444" stroke-dasharray="1 1"/><path d="M11 1l4 3-4 3-4-3z" fill="#fff080" stroke="#e8c020"/></svg></div><div class="t" style="left:45px;top:157px;font-size:11px">Обработки</div><div class="plus" style="top:176px"></div><div class="a" style="left:23px;top:172px;height:16px"><svg width="16" height="16" viewBox="0 0 16 16"><rect x="1.5" y="1.5" width="12" height="12" fill="#f0f4f8" stroke="#6e8fae"/><rect x="2" y="2" width="11" height="2" fill="#5a86b0"/><path d="M4 6v6M6 6v6M8 6v6M10 6v6M12 6v6" stroke="#7890a8" stroke-dasharray="1 1"/></svg></div><div class="t" style="left:45px;top:176px;font-size:11px">Планы видов характеристик</div><div class="plus" style="top:195px"></div><div class="a" style="left:23px;top:191px;height:16px"><svg width="16" height="16" viewBox="0 0 16 16"><path d="M1 2.5h7M4.5 2.5v11M6 6.5h7M9.5 6.5v9" fill="none" stroke="#3f7eb8" stroke-width="1.6"/></svg></div><div class="t" style="left:45px;top:195px;font-size:11px">Планы счетов</div><div class="a" style="left:232px;top:0;width:17px;height:207px;background:#f9f7ee;border-left:1px solid #c2b68f;border-right:1px solid #c2b68f"></div><div class="a" style="left:233px;top:0;width:15px;height:21px;background:linear-gradient(90deg,#f8f6ec,#ede6cc);border-bottom:1px solid #c2b68f"></div><div class="a" style="left:236px;top:7px;width:0;height:0;border-left:4px solid transparent;border-right:4px solid transparent;border-bottom:6px solid #d4d4cc"></div><div class="a" style="left:233px;top:21px;width:15px;height:86px;background:linear-gradient(90deg,#f6f2e0,#e8e0c0);border-bottom:1px solid #c2b68f"></div><div class="a" style="left:237px;top:61px;width:6px;height:6px;border-radius:50%;background:#f4f2ea;border:1px solid #dcd8cc"></div><div class="a" style="left:233px;top:186px;width:15px;height:21px;background:linear-gradient(90deg,#f8f6ec,#ede6cc);border-top:1px solid #c2b68f"></div><div class="a" style="left:236px;top:194px;width:0;height:0;border-left:4px solid transparent;border-right:4px solid transparent;border-top:6px solid #808080"></div></div>
<div class="hdr" style="left:0;top:373px;width:249px;height:18px;border-right:1px solid #707070"></div><div class="t" style="left:3px;top:376px;font-size:12px;font-weight:bold;color:#5e5a54">Расширение (МДК)</div><svg class="a" style="left:219px;top:377px" width="6" height="10" viewBox="0 0 6 10"><rect x="1" y="0.5" width="4" height="6" rx="1.5" fill="#fff" stroke="#e0e0e0"/><path d="M3 6.5v3" stroke="#fff"/></svg><svg class="a" style="left:233px;top:376px" width="12" height="12" viewBox="0 0 12 12"><path d="M1.5 1.5l9 9M10.5 1.5l-9 9" stroke="#505050" stroke-width="2"/></svg><div class="t" style="left:3px;top:398px;font-size:11px;color:#2a2010">Действия</div><div class="a" style="left:57px;top:402px;width:0;height:0;border-left:3px solid transparent;border-right:3px solid transparent;border-top:3px solid #3a3020"></div><svg class="a" style="left:69px;top:395px" width="16" height="16" viewBox="0 0 16 16"><circle cx="8" cy="8" r="7.5" fill="#bac6b2" stroke="#aab6a0"/><path d="M8 4v8M4 8h8" stroke="#e8eee4" stroke-width="2"/></svg><svg class="a" style="left:93px;top:395px" width="16" height="16" viewBox="0 0 16 16"><path d="M3 13l1-4 7-7 3 3-7 7z" fill="#a8b8a0" stroke="#98a890"/></svg><svg class="a" style="left:116px;top:395px" width="16" height="16" viewBox="0 0 16 16"><path d="M1.5 1.5h7l3 3v9h-10z" fill="#d0dce8" stroke="#b0c0d0"/><circle cx="11.5" cy="12" r="3.5" fill="#b8c8b0"/><path d="M11.5 10v4M9.5 12h4" stroke="#e8efe4"/></svg><svg class="a" style="left:139px;top:395px" width="16" height="16" viewBox="0 0 16 16"><path d="M2.5 3.5l9 9M11.5 3.5l-9 9" stroke="#d4bcb4" stroke-width="2"/></svg><svg class="a" style="left:161px;top:395px" width="16" height="16" viewBox="0 0 16 16"><path d="M7 1L1 7h3.5v5.5h5V7H13z" fill="#b0c0d0" stroke="#a0b0c0"/></svg><svg class="a" style="left:184px;top:395px" width="16" height="16" viewBox="0 0 16 16"><path d="M7 13L1 7h3.5V1.5h5V7H13z" fill="#b0c0d0" stroke="#a0b0c0"/></svg><svg class="a" style="left:207px;top:395px" width="16" height="16" viewBox="0 0 16 16"><rect x="1.5" y="1.5" width="12" height="13" fill="#d4dee8" stroke="#b4c4d4"/><path d="M3 4h7M3 6.5h7M3 9h7M3 11.5h5" stroke="#a8bcd0"/><path d="M12 2v12M10.5 12.5l1.5 2 1.5-2" fill="none" stroke="#8aa4bc"/></svg><div class="a" style="left:0;top:415px;width:249px;height:22px;background:#fff;border:1px solid #c2b68f;border-radius:4px"></div><div class="a" style="left:233px;top:416px;width:15px;height:20px;background:linear-gradient(90deg,#f8f6ec,#efe9d6);border-left:1px solid #d4caa8;border-radius:0 3px 3px 0"></div><svg class="a" style="left:236px;top:421px" width="10" height="10" viewBox="0 0 10 10"><path d="M1 1l8 8M9 1l-8 8" stroke="#4a3a08" stroke-width="1.6"/></svg><div class="t" style="left:3px;top:420px;font-size:10.5px;color:#c4c6d8">Поиск (Ctrl+Alt+M)</div><div class="tree" style="left:0;top:437px;width:249px;height:208px;overflow:hidden"><div class="a" style="left:24px;top:0;width:93px;height:19px;background:#6a97d0"></div><div class="t" style="left:26px;top:5px;font-size:11px;color:#fff">РасширениеМДК</div><svg class="a" style="left:4px;top:2px" width="16" height="16" viewBox="0 0 16 16"><defs><radialGradient id="gb2" cx="50%" cy="30%" r="70%"><stop offset="0" stop-color="#fffce0"/><stop offset="0.45" stop-color="#f0d040"/><stop offset="1" stop-color="#c89800"/></radialGradient></defs><circle cx="10" cy="7.5" r="6" fill="url(#gb2)" stroke="#d8b030" stroke-width="0.6"/><path d="M1 11l3-1.5 1.5-3 1.5 3 2.5 0.5-2 2 0.5 3-2.5-1.5-2.5 1.5 0.5-3z" fill="#e8a020" stroke="#c07010" stroke-width="0.5"/></svg><div class="plus" style="top:24px"></div><div class="a" style="left:23px;top:20px;height:16px"><svg width="16" height="16" viewBox="0 0 16 16"><circle cx="6.5" cy="4.5" r="2.8" fill="#7fb4e0" stroke="#4f86b8" stroke-width="0.8"/><circle cx="4.5" cy="11.5" r="2.8" fill="#5cc040" stroke="#3a9a28" stroke-width="0.8"/><circle cx="11.5" cy="9.5" r="2.8" fill="#c09070" stroke="#8a6040" stroke-width="0.8"/></svg></div><div class="t" style="left:45px;top:24px;font-size:11px">Общие</div><div class="plus" style="top:43px"></div><div class="a" style="left:23px;top:39px;height:16px"><svg width="16" height="16" viewBox="0 0 16 16"><g fill="#8fb4d4" stroke="#4d7aa0" stroke-width="1"><rect x="1.5" y="5.5" width="5" height="5"/><rect x="7.5" y="1.5" width="5" height="5"/><rect x="1.5" y="10.5" width="5" height="4"/><rect x="6.5" y="10.5" width="5" height="4"/></g></svg></div><div class="t" style="left:45px;top:43px;font-size:11px">Константы</div><div class="plus" style="top:62px"></div><div class="a" style="left:23px;top:58px;height:16px"><svg width="16" height="16" viewBox="0 0 16 16"><rect x="1.5" y="1.5" width="11" height="13" fill="#fff" stroke="#6e8fae"/><rect x="2" y="2" width="10" height="2" fill="#f0d040"/><path d="M5.5 2v12M9 2v12" stroke="#6e8fae"/></svg></div><div class="t" style="left:45px;top:62px;font-size:11px">Справочники</div><div class="plus" style="top:81px"></div><div class="a" style="left:23px;top:77px;height:16px"><svg width="16" height="16" viewBox="0 0 16 16"><rect x="2.5" y="1.5" width="12" height="13" fill="#fbfcfe" stroke="#6f8ca8"/><path d="M7 3.5h5M7 5.5h5" stroke="#b0b8c0"/><path d="M4.5 8.5h8M4.5 10.5h8M4.5 12.5h8" stroke="#a8c0d6"/></svg></div><div class="t" style="left:45px;top:81px;font-size:11px">Документы</div><div class="a" style="left:23px;top:96px;height:16px"><svg width="16" height="16" viewBox="0 0 16 16"><defs><linearGradient id="jg" x1="0" y1="0" x2="1" y2="1"><stop offset="0" stop-color="#9ed080"/><stop offset="1" stop-color="#3e8a30"/></linearGradient></defs><rect x="3" y="0.5" width="11" height="14" rx="1" fill="#e8f0e0" stroke="#90b080"/><rect x="1.5" y="1.5" width="11" height="14" rx="1" fill="url(#jg)" stroke="#4a9038"/><rect x="5" y="3.5" width="5" height="1.5" fill="#e8f8e0"/><path d="M3 7h2M3 9.5h2" stroke="#e0f4d4"/></svg></div><div class="t" style="left:45px;top:100px;font-size:11px">Журналы документов</div><div class="a" style="left:23px;top:115px;height:16px"><svg width="16" height="16" viewBox="0 0 16 16"><path d="M5 1.5H3.5v5.5L2 8l1.5 1v5.5H5M11 1.5h1.5v5.5L14 8l-1.5 1v5.5H11" fill="none" stroke="#3f5f80"/><path d="M4.5 12.5h1.2M7.4 12.5h1.2M10.3 12.5h1.2" stroke="#3f5f80" stroke-width="1.2"/></svg></div><div class="t" style="left:45px;top:119px;font-size:11px">Перечисления</div><div class="a" style="left:23px;top:134px;height:16px"><svg width="16" height="16" viewBox="0 0 16 16"><rect x="2.5" y="1.5" width="10" height="13" fill="#f4f8fc" stroke="#7a98b4"/><path d="M5.5 11V5M7.5 11V7M9.5 11V8" stroke="#e04040"/><path d="M8.5 11V6" stroke="#40a040"/><path d="M4 12.5h7" stroke="#9ab"/></svg></div><div class="t" style="left:45px;top:138px;font-size:11px">Отчеты</div><div class="plus" style="top:157px"></div><div class="a" style="left:23px;top:153px;height:16px"><svg width="16" height="16" viewBox="0 0 16 16"><rect x="0.5" y="8.5" width="8" height="6" rx="1" fill="#a0c4e4" stroke="#3d6a94"/><path d="M4.5 5v6M2.5 9l2 2 2-2" fill="none" stroke="#222"/><path d="M4.5 5h3" stroke="#444" stroke-dasharray="1 1"/><path d="M11 1l4 3-4 3-4-3z" fill="#fff080" stroke="#e8c020"/></svg></div><div class="t" style="left:45px;top:157px;font-size:11px">Обработки</div><div class="plus" style="top:176px"></div><div class="a" style="left:23px;top:172px;height:16px"><svg width="16" height="16" viewBox="0 0 16 16"><rect x="1.5" y="1.5" width="12" height="12" fill="#f0f4f8" stroke="#6e8fae"/><rect x="2" y="2" width="11" height="2" fill="#5a86b0"/><path d="M4 6v6M6 6v6M8 6v6M10 6v6M12 6v6" stroke="#7890a8" stroke-dasharray="1 1"/></svg></div><div class="t" style="left:45px;top:176px;font-size:11px">Планы видов характеристик</div><div class="a" style="left:23px;top:191px;height:16px"><svg width="16" height="16" viewBox="0 0 16 16"><path d="M1 2.5h7M4.5 2.5v11M6 6.5h7M9.5 6.5v9" fill="none" stroke="#3f7eb8" stroke-width="1.6"/></svg></div><div class="t" style="left:45px;top:195px;font-size:11px">Планы счетов</div><div class="a" style="left:232px;top:0;width:17px;height:207px;background:#f9f7ee;border-left:1px solid #c2b68f;border-right:1px solid #c2b68f"></div><div class="a" style="left:233px;top:0;width:15px;height:21px;background:linear-gradient(90deg,#f8f6ec,#ede6cc);border-bottom:1px solid #c2b68f"></div><div class="a" style="left:236px;top:7px;width:0;height:0;border-left:4px solid transparent;border-right:4px solid transparent;border-bottom:6px solid #d4d4cc"></div><div class="a" style="left:233px;top:21px;width:15px;height:86px;background:linear-gradient(90deg,#f6f2e0,#e8e0c0);border-bottom:1px solid #c2b68f"></div><div class="a" style="left:237px;top:61px;width:6px;height:6px;border-radius:50%;background:#f4f2ea;border:1px solid #dcd8cc"></div><div class="a" style="left:233px;top:186px;width:15px;height:21px;background:linear-gradient(90deg,#f8f6ec,#ede6cc);border-top:1px solid #c2b68f"></div><div class="a" style="left:236px;top:194px;width:0;height:0;border-left:4px solid transparent;border-right:4px solid transparent;border-top:6px solid #808080"></div></div>
<!--MESSAGES-->
<div class="a" style="left:0;top:645px;width:1421px;height:5px;background:#f5f1de;border-bottom:1px solid #fcfcf8"></div><div class="a" style="left:0;top:650px;width:1421px;height:17px;background:#cacaca"></div><div class="t" style="left:3px;top:653px;font-size:11.7px;font-weight:bold;color:#3c3a36">Служебные сообщения</div><div class="a chk" style="left:0;top:667px;width:17px;height:269px"></div><div class="a" style="left:17px;top:667px;width:1404px;height:269px;background:#fff"></div><div class="a" style="left:19px;top:667px;width:1402px;height:16px;background:#5067c2"></div><div class="err" style="top:671px">err</div><div class="err" style="top:767px">err</div><div class="err" style="top:847px">err</div><div class="err" style="top:879px">err</div><div class="a" style="left:6px;top:912px;width:0;height:0;border-top:3px solid transparent;border-bottom:3px solid transparent;border-left:3px solid #4a6a90"></div><div class="a" style="left:6px;top:928px;width:0;height:0;border-top:3px solid transparent;border-bottom:3px solid transparent;border-left:3px solid #4a6a90"></div><div class="code" style="left:19px;top:668px;color:#000"><span style="color:#fff">{Справочник.ВерсииРасширений.МодульМенеджера(130)}: Ошибка при получении значения атрибута контекста (ВерсияРасширений)</span>
    ВерсияРасширений = ПараметрыСеанса.ВерсияРасширений;
по причине:
Ошибка инициализации модуля: РасширениеМДК ОбщийМодуль.УправлениеСвойствамиСлужебный.Модуль
по причине:
{РасширениеМДК ОбщийМодуль.УправлениеСвойствамиСлужебный.Модуль(183,43)}: Процедура или функция с указанным именем не определена (НеобходимоПеренестиЗначениеИзСсылки)

по причине:
Ошибка инициализации модуля: РасширениеМДК ОбщийМодуль.УправлениеСвойствамиСлужебный.Модуль
по причине:
{РасширениеМДК ОбщийМодуль.УправлениеСвойствамиСлужебный.Модуль(183,43)}: Процедура или функция с указанным именем не определена (НеобходимоПеренестиЗначениеИзСсылки)
{РасширениеМДК ОбщийМодуль.УправлениеСвойствамиСлужебный.Модуль(183,43)}: Процедура или функция с указанным именем не определена (НеобходимоПеренестиЗначениеИзСсылки)
                НеобходимоПеренестиЗначениеИзСсылки = &lt;&lt;?&gt;&gt;НеобходимоПеренестиЗначениеИзСсылки(
{РасширениеМДК ОбщийМодуль.УправлениеСвойствамиСлужебный.Модуль(191,27)}: Процедура или функция с указанным именем не определена (ЗначениеБезСсылки)
                        ЗначениеБезСсылки = &lt;&lt;?&gt;&gt;ЗначениеБезСсылки(Строка.ТекстоваяСтрока, Строка.Значение);
Синтаксических ошибок не обнаружено!
Синтаксических ошибок не обнаружено!</div><div class="a" style="left:683px;top:747px;width:2px;height:16px;background:#000"></div><div class="t" style="left:1227px;top:900px;font-size:20px;color:#bdbdbd">Активация Windows</div><div class="t" style="left:1227px;top:924px;font-size:15px;color:#c4c4c4">Чтобы активировать Windows, перейдите в раздел</div>
</body></html>
